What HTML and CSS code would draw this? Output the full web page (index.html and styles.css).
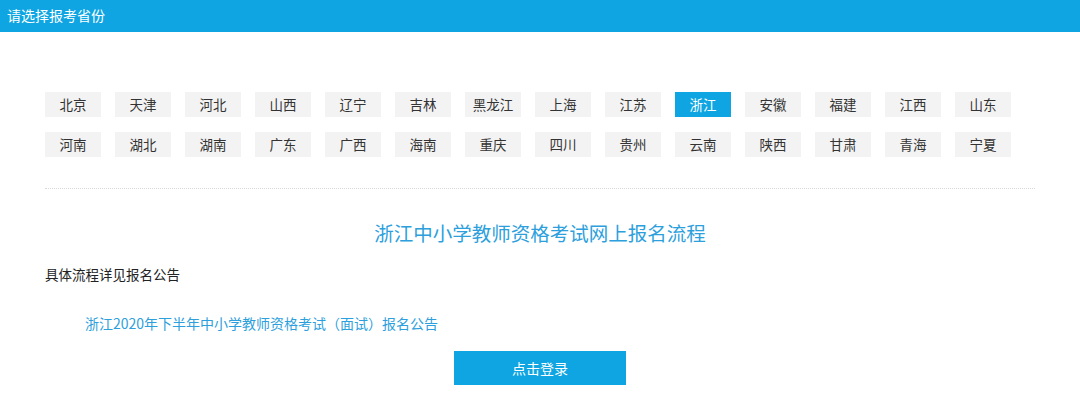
FILE: index.html
```html
<!DOCTYPE html>
<html lang="zh-CN">
<head>
<meta charset="utf-8">
<title>请选择报考省份</title>
<link rel="stylesheet" href="styles.css">
</head>
<body>
<div class="header">请选择报考省份</div>
<div class="main">
  <div class="provinces">
    <span class="prov">北京</span><span class="prov">天津</span><span class="prov">河北</span><span class="prov">山西</span><span class="prov">辽宁</span><span class="prov">吉林</span><span class="prov">黑龙江</span><span class="prov">上海</span><span class="prov">江苏</span><span class="prov active">浙江</span><span class="prov">安徽</span><span class="prov">福建</span><span class="prov">江西</span><span class="prov">山东</span>
    <span class="prov">河南</span><span class="prov">湖北</span><span class="prov">湖南</span><span class="prov">广东</span><span class="prov">广西</span><span class="prov">海南</span><span class="prov">重庆</span><span class="prov">四川</span><span class="prov">贵州</span><span class="prov">云南</span><span class="prov">陕西</span><span class="prov">甘肃</span><span class="prov">青海</span><span class="prov">宁夏</span>
  </div>
  <div class="divider"></div>
  <h2 class="title">浙江中小学教师资格考试网上报名流程</h2>
  <p class="note">具体流程详见报名公告</p>
  <a class="notice" href="#">浙江2020年下半年中小学教师资格考试（面试）报名公告</a>
  <div class="actions"><a class="login" href="#">点击登录</a></div>
</div>
</body>
</html>
```
FILE: styles.css
```css
* { box-sizing: border-box; }
body {
  margin: 0;
  background: #fff;
  font-family: "Noto Sans CJK SC", "Microsoft YaHei", sans-serif;
  color: #333;
}
.header {
  height: 32px;
  line-height: 31px;
  background: #0ea5e2;
  color: #fff;
  font-size: 14px;
  padding-left: 7px;
}
.main {
  width: 990px;
  margin-left: 45px;
  padding-top: 60px;
}
.provinces {
  display: grid;
  grid-template-columns: repeat(14, 56px);
  column-gap: 14px;
  row-gap: 15px;
}
.prov {
  height: 25px;
  line-height: 25px;
  text-align: center;
  background: #f3f3f3;
  font-size: 13.5px;
  color: #333;
}
.prov.active {
  background: #0ea5e2;
  color: #fff;
}
.divider {
  margin-top: 31px;
  border-top: 1px dotted #d8d8d8;
}
.title {
  margin: 31px 0 0;
  text-align: center;
  font-weight: normal;
  font-size: 19.5px;
  line-height: 26px;
  color: #2d9fdc;
}
.note {
  margin: 18px 0 0;
  font-size: 13.5px;
  line-height: 20px;
  color: #222;
}
.notice {
  display: block;
  margin: 29px 0 0 40px;
  font-size: 14px;
  line-height: 20px;
  color: #2d9fdc;
  text-decoration: none;
}
.actions {
  display: flex;
  justify-content: center;
  margin-top: 18px;
}
.login {
  width: 172px;
  height: 34px;
  line-height: 34px;
  text-align: center;
  background: #0ea5e2;
  color: #fff;
  font-size: 14px;
  text-decoration: none;
}
```
